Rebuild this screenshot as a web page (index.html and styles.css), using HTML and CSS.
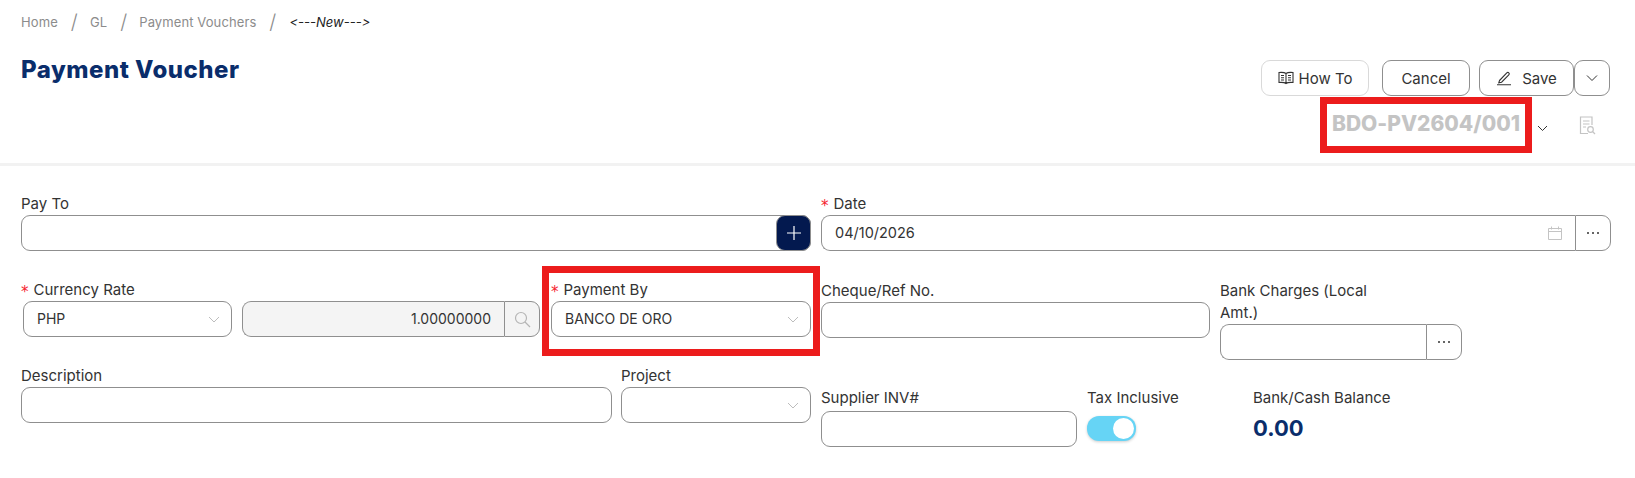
FILE: index.html
```html
<!DOCTYPE html>
<html lang="en">
<head>
    <meta charset="UTF-8">
    <title>Payment Voucher</title>
    <link rel="stylesheet" href="styles.css">
</head>
<body>
    <div class="page-head">
        <div class="head-left">
            <div class="breadcrumb">
                <a class="crumb">Home</a><span class="sep">/</span>
                <a class="crumb">GL</a><span class="sep">/</span>
                <a class="crumb">Payment Vouchers</a><span class="sep">/</span>
                <span class="crumb-current">&lt;---New---&gt;</span>
            </div>
            <h1>Payment Voucher</h1>
        </div>
        <div class="head-right">
            <div class="actions">
                <button class="btn btn-light" type="button">
                    <svg width="16" height="14" viewBox="0 0 16 14" fill="none" stroke="#333" stroke-width="1.1"><path d="M8 2.5C6.5 1.3 3.5 1.3 1 1.5v10c2.500-.2 5.500-.2 7 1 1.500-1.200 4.500-1.200 7-1v-10c-2.500-.2-5.500-.2-7 1zM8 2.500v10M3 4.500h3M3 6.800h3M3 9h3M10 4.500h3M10 6.800h3M10 9h3"/></svg>
                    How To
                </button>
                <button class="btn btn-cancel" type="button">Cancel</button>
                <div class="btn-group">
                    <button class="btn btn-save" type="button">
                        <svg width="16" height="16" viewBox="0 0 16 16" fill="none" stroke="#333" stroke-width="1.1"><path d="M3.500 10.500 10.800 2.800c.6-.6 1.500-.6 2 0 .6.500.6 1.400 0 2l-7.200 7.400-2.800.6zM1 14.800h14"/></svg>
                        Save
                    </button>
                    <button class="btn btn-caret" type="button">
                        <svg width="12" height="8" viewBox="0 0 12 8" fill="none" stroke="#333" stroke-width="1"><path d="m1 1.500 5 5 5-5"/></svg>
                    </button>
                </div>
            </div>
            <div class="doc-row">
                <div class="doc-no">BDO-PV2604/001</div>
                <svg class="doc-caret" width="11" height="7" viewBox="0 0 11 7" fill="none" stroke="#333" stroke-width="1"><path d="m1 1 4.500 4.500L10 1"/></svg>
                <svg class="doc-icon" width="17" height="19" viewBox="0 0 17 19" fill="none" stroke="#c4c4c4" stroke-width="1.200"><path d="M9 17.500H1.500V1h11.500v8M4 5h6.500M4 8h6.500M4 11h3"/><circle cx="11.500" cy="13.500" r="2.800"/><path d="m13.500 15.500 2.500 2.500"/></svg>
            </div>
        </div>
    </div>

    <div class="form">
        <div class="form-col">
            <div class="field">
                <label>Pay To</label>
                <div class="input-wrap">
                    <div class="input"></div>
                    <button class="plus-btn" type="button">
                        <svg width="14" height="14" viewBox="0 0 14 14" stroke="#fff" stroke-width="1.200"><path d="M7 0v14M0 7h14"/></svg>
                    </button>
                </div>
            </div>
            <div class="row row-rate">
                <div class="field field-currency">
                    <label><span class="req">*</span>Currency Rate</label>
                    <div class="rate-wrap">
                        <div class="input select-currency">PHP
                            <svg class="chevron" width="12" height="7" viewBox="0 0 12 7" fill="none" stroke="#bdbdbd"><path d="m1 1 5 5 5-5"/></svg>
                        </div>
                        <div class="input-group group-rate">
                            <div class="input input-rate">1.00000000</div>
                            <div class="addon addon-search">
                                <svg width="17" height="17" viewBox="0 0 17 17" fill="none" stroke="#b5b5b5" stroke-width="1.200"><circle cx="7" cy="7" r="5.500"/><path d="m11 11 5 5"/></svg>
                            </div>
                        </div>
                    </div>
                </div>
                <div class="field field-payment">
                    <span class="mark mark-payment"></span>
                    <label><span class="req">*</span>Payment By</label>
                    <div class="input">BANCO DE ORO
                        <svg class="chevron" width="12" height="7" viewBox="0 0 12 7" fill="none" stroke="#bdbdbd"><path d="m1 1 5 5 5-5"/></svg>
                    </div>
                </div>
            </div>
            <div class="row row-desc">
                <div class="field field-desc">
                    <label>Description</label>
                    <div class="input"></div>
                </div>
                <div class="field field-project">
                    <label>Project</label>
                    <div class="input">
                        <svg class="chevron" width="12" height="7" viewBox="0 0 12 7" fill="none" stroke="#bdbdbd"><path d="m1 1 5 5 5-5"/></svg>
                    </div>
                </div>
            </div>
        </div>

        <div class="form-col col-right">
            <div class="field">
                <label><span class="req">*</span>Date</label>
                <div class="input-group">
                    <div class="input input-date">04/10/2026
                        <svg class="cal" width="14" height="14" viewBox="0 0 14 14" fill="none" stroke="#c4c4c4"><path d="M.5 2.500h13v11H.5zM.5 5.500h13M3.500.5v3M10.500.5v3"/></svg>
                    </div>
                    <div class="addon addon-dots">
                        <svg width="14" height="4" viewBox="0 0 14 4" fill="#333"><circle cx="2" cy="2" r="1"/><circle cx="7" cy="2" r="1"/><circle cx="12" cy="2" r="1"/></svg>
                    </div>
                </div>
            </div>
            <div class="row row-cheque">
                <div class="field field-cheque">
                    <label>Cheque/Ref No.</label>
                    <div class="input"></div>
                </div>
                <div class="field field-charges">
                    <label>Bank Charges (Local Amt.)</label>
                    <div class="input-group">
                        <div class="input"></div>
                        <div class="addon addon-dots">
                            <svg width="14" height="4" viewBox="0 0 14 4" fill="#333"><circle cx="2" cy="2" r="1"/><circle cx="7" cy="2" r="1"/><circle cx="12" cy="2" r="1"/></svg>
                        </div>
                    </div>
                </div>
            </div>
            <div class="row row-supplier">
                <div class="field field-supplier">
                    <label>Supplier INV#</label>
                    <div class="input"></div>
                </div>
                <div class="field field-tax">
                    <label>Tax Inclusive</label>
                    <div class="toggle"><span class="knob"></span></div>
                </div>
                <div class="field field-balance">
                    <label>Bank/Cash Balance</label>
                    <div class="balance">0.00</div>
                </div>
            </div>
        </div>
    </div>
</body>
</html>
```

FILE: styles.css
```css
* {
    box-sizing: border-box;
}
body {
    margin: 0;
    background: #fff;
    font-family: Inter, "Noto Sans", sans-serif;
    font-size: 14px;
    color: #333;
    font-variant-ligatures: none;
    font-feature-settings: "calt" 0;
}
.page-head {
    display: flex;
    justify-content: space-between;
    height: 166px;
    padding: 0 25px 0 21px;
    border-bottom: 3px solid #f2f2f2;
}
.breadcrumb {
    display: flex;
    align-items: center;
    height: 22px;
    margin-top: 11px;
    font-size: 13px;
    letter-spacing: 0.1px;
    color: #8c8c8c;
}
.sep {
    margin: 0 12px 0 13px;
    font-size: 20px;
    font-weight: 300;
}
.crumb-current {
    margin-left: 1px;
    font-size: 13px;
    font-style: italic;
    letter-spacing: 0;
    color: #222;
}
h1 {
    margin: 22px 0 0;
    font-size: 24px;
    font-weight: 800;
    line-height: 30px;
    letter-spacing: 0.5px;
    color: #0a2d6b;
}
.head-right {
    display: flex;
    flex-direction: column;
    align-items: flex-end;
}
.actions {
    display: flex;
    align-items: center;
    gap: 13px;
    margin-top: 60px;
}
.btn {
    display: flex;
    align-items: center;
    justify-content: center;
    gap: 5px;
    height: 36px;
    padding: 0;
    background: #fff;
    border: 1px solid #8f8f8f;
    border-radius: 9px;
    font-family: inherit;
    font-size: 15px;
    color: #333;
}
.btn-light {
    width: 108px;
    border-color: #d9d9d9;
}
.btn-cancel {
    width: 88px;
}
.btn-group {
    display: flex;
    margin-left: -4px;
}
.btn-save {
    width: 95px;
    gap: 10px;
}
.btn-caret {
    width: 36px;
}
.doc-row {
    display: flex;
    align-items: center;
    height: 56px;
    margin-top: 1px;
    margin-right: 14px;
}
.doc-no {
    display: flex;
    align-items: center;
    justify-content: center;
    width: 212px;
    height: 56px;
    padding-bottom: 4px;
    border: 7px solid #ec1c1c;
    font-size: 21px;
    font-weight: 800;
    color: #c4c4c4;
    white-space: nowrap;
}
.doc-caret {
    margin: 6px 0 0 5px;
}
.doc-icon {
    margin-left: 31px;
}
.form {
    display: flex;
    gap: 10px;
    padding: 0 24px 0 21px;
}
.form-col {
    width: 790px;
    padding-top: 27px;
}
.field {
    position: relative;
    display: flex;
    flex-direction: column;
}
label {
    display: block;
    font-size: 15px;
    line-height: 22px;
    color: #333;
}
.req {
    margin-right: 5px;
    font-family: "DejaVu Sans", sans-serif;
    font-size: 15px;
    line-height: 1;
    vertical-align: -2px;
    color: #f5222d;
}
.input {
    position: relative;
    display: flex;
    align-items: center;
    height: 36px;
    padding: 0 13px 2px;
    background: #fff;
    border: 1px solid #8f8f8f;
    border-radius: 9px;
    font-size: 14px;
}
.chevron {
    position: absolute;
    right: 11px;
    top: 14px;
}
.input-wrap {
    display: flex;
}
.input-wrap .input {
    flex: 1;
}
.plus-btn {
    display: flex;
    align-items: center;
    justify-content: center;
    width: 35px;
    height: 36px;
    margin-left: -35px;
    background: #03194f;
    border: 1px solid #8f8f8f;
    border-radius: 9px;
    z-index: 1;
}
.input-group {
    display: flex;
}
.input-group .input {
    flex: 1;
    border-radius: 9px 0 0 9px;
    border-right: 0;
}
.addon {
    display: flex;
    align-items: center;
    justify-content: center;
    height: 36px;
    border: 1px solid #8f8f8f;
    border-radius: 0 9px 9px 0;
}
.addon-dots {
    width: 36px;
}
.addon-search {
    flex: none;
    width: 36px;
    background: #f4f4f4;
}
.input-date {
    font-size: 14.5px;
}
.row {
    display: flex;
    align-items: flex-start;
}
.row-rate {
    margin-top: 28px;
}
.rate-wrap {
    display: flex;
    gap: 10px;
    padding-left: 2px;
}
.field-currency {
    width: 520px;
}
.select-currency {
    width: 209px;
}
.group-rate {
    width: 298px;
}
.input-rate {
    justify-content: flex-end;
    background: #f4f4f4;
}
.field-payment {
    width: 260px;
    margin-left: 10px;
}
.mark {
    position: absolute;
    border: 7px solid #ec1c1c;
    pointer-events: none;
}
.mark-payment {
    top: -13px;
    left: -9px;
    right: -9px;
    bottom: -19px;
}
.row-desc {
    margin-top: 28px;
    gap: 9px;
}
.field-desc {
    width: 591px;
}
.field-project {
    width: 190px;
}
.row-cheque {
    margin-top: 29px;
    gap: 10px;
}
.field-cheque {
    width: 389px;
}
.field-charges {
    width: 242px;
}
.field-charges label {
    width: 165px;
}
.row-supplier {
    margin-top: 27px;
}
.field-supplier {
    width: 256px;
}
.field-supplier label {
    margin-bottom: 2px;
}
.field-tax {
    width: 166px;
    margin-left: 10px;
}
.toggle {
    position: relative;
    width: 49px;
    height: 25px;
    margin-top: 7px;
    background: #66d4f5;
    border-radius: 12px;
    box-shadow: 0 1px 3px rgba(0, 0, 0, 0.2);
}
.knob {
    position: absolute;
    top: 2px;
    right: 2px;
    width: 21px;
    height: 21px;
    background: #fff;
    border-radius: 50%;
}
.balance {
    margin-top: 6px;
    font-size: 22px;
    font-weight: 700;
    color: #0a2d6b;
}
.cal {
    position: absolute;
    right: 13px;
    top: 10px;
}
```
